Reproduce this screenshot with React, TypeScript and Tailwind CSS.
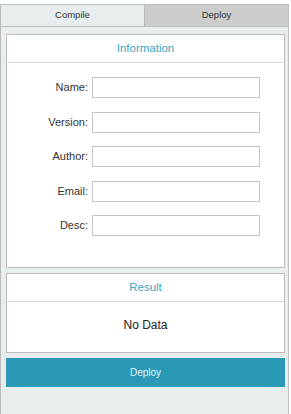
import React from "react";

const fields = ["Name", "Version", "Author", "Email", "Desc"];

function Panel({ title, children }: { title: string; children: React.ReactNode }) {
  return (
    <div className="w-[279px] ml-[5px] bg-white border border-[#bdbdbd]">
      <div className="h-[28px] flex items-center justify-center text-[11.5px] text-[#3aa3c3] border-b border-[#d8d8d8]">
        {title}
      </div>
      {children}
    </div>
  );
}

export default function App() {
  return (
    <div className="w-[291px] h-[414px] bg-white pt-[4px] font-['Liberation_Sans',Arial,sans-serif]">
      <div className="w-[289px] h-[410px] bg-[#e8eded] border-l border-r border-t border-[#bbbbbb]">
        {/* tabs */}
        <div className="flex h-[22px] border-b border-[#bbbbbb] text-[9.5px] text-[#333]">
          <div className="w-[143px] flex items-center justify-center bg-[#e8eded]">Compile</div>
          <div className="flex-1 flex items-center justify-center bg-[#cccccc] border-l border-[#bbbbbb]">
            Deploy
          </div>
        </div>

        <div className="pt-[7px] flex flex-col gap-[5px]">
          <Panel title="Information">
            <div className="h-[204px] pt-[14px] flex flex-col gap-[13.5px]">
              {fields.map((f) => (
                <div key={f} className="flex items-center h-[21px]">
                  <label className="w-[85px] text-right text-[11px] text-[#333] pr-[4px]">{f}:</label>
                  <input
                    type="text"
                    className="w-[168px] h-[21px] border border-[#c4c4c4] bg-white outline-none"
                  />
                </div>
              ))}
            </div>
          </Panel>

          <Panel title="Result">
            <div className="h-[50px] pb-[4px] flex items-center justify-center text-[12px] text-[#222]">No Data</div>
          </Panel>

          <button className="w-[279px] ml-[5px] h-[29px] bg-[#2a99b6] text-[10px] text-[#e4f3f7]">
            Deploy
          </button>
        </div>
      </div>
    </div>
  );
}
